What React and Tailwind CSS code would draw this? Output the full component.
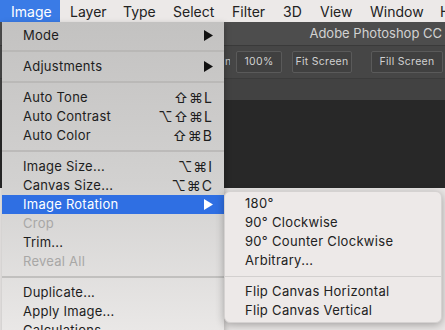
import { useState } from "react";

const bar = ["Image", "Layer", "Type", "Select", "Filter", "3D", "View", "Window", "H"];
const barW = [60, 53, 50, 59, 51, 37, 50, 70, 20];

const menu = [
  { label: "Mode", arrow: true },
  "sep",
  { label: "Adjustments", arrow: true },
  "sep",
  { label: "Auto Tone", keys: "⇧⌘L" },
  { label: "Auto Contrast", keys: "⌥⇧⌘L" },
  { label: "Auto Color", keys: "⇧⌘B" },
  "sep",
  { label: "Image Size...", keys: "⌥⌘I" },
  { label: "Canvas Size...", keys: "⌥⌘C" },
  { label: "Image Rotation", arrow: true, active: true },
  { label: "Crop", disabled: true },
  { label: "Trim..." },
  { label: "Reveal All", disabled: true },
  "sep",
  { label: "Duplicate..." },
  { label: "Apply Image..." },
  { label: "Calculations..." },
];

const sub = ["180°", "90° Clockwise", "90° Counter Clockwise", "Arbitrary...", "sep", "Flip Canvas Horizontal", "Flip Canvas Vertical"];

const Arrow = ({ white }) => (
  <svg width="9" height="11" viewBox="0 0 9 11">
    <path d="M0 0 L9 5.5 L0 11 Z" fill={white ? "#fff" : "#111"} />
  </svg>
);

const App = () => {
  const [open] = useState(true);

  return (
    <div className="relative w-[445px] h-[330px] overflow-hidden bg-[#e9e6e5] font-['Inter',sans-serif]">
      <div className="flex h-[22px] bg-[#ece9e8] text-[14px] text-[#222] items-center">
        {bar.map((b, i) => (
          <div
            key={b}
            style={{ width: barW[i] }}
            className={`h-full flex items-center shrink-0 ${i === 0 ? "pl-[11px] bg-[#3a7be6] text-white" : "pl-[10px]"}`}
          >
            {b}
          </div>
        ))}
      </div>

      <div className="h-[166px] bg-[#272727] flex flex-col">
        <div className="h-[24px] bg-[#4d4d4d] border-b border-[#3a3a3a] flex items-center justify-end pr-[3px] text-[13px] text-[#d2d2d2]">
          Adobe Photoshop CC
        </div>
        <div className="h-[33px] bg-[#464646] border-b border-[#3b3b3b] flex items-center pl-[225px] text-[10.5px] tracking-[0.3px] text-[#d0d0d0]">
          <span className="w-[5px] overflow-hidden">n</span>
          <div className="w-[46px] h-[22px] ml-[6px] border border-[#5a5a5a] bg-[#404040] rounded-[2px] flex items-center justify-center">100%</div>
          <div className="w-[60px] h-[22px] ml-[10px] border border-[#5a5a5a] bg-[#404040] rounded-[2px] flex items-center justify-center">Fit Screen</div>
          <div className="w-[72px] h-[22px] ml-[19px] border border-[#5a5a5a] bg-[#404040] rounded-[2px] flex items-center justify-center shrink-0">Fill Screen</div>
        </div>
        <div className="h-[21px] bg-[#424242]" />
        <div className="flex-1 bg-[#282828]" />
      </div>

      {open && (
        <div className="absolute left-[2px] top-[22px] w-[222px] pt-[4px] bg-linear-to-b from-[#c3c2c1] via-[#d2d1d0] to-[#ebe9e8] text-[13px] tracking-[0.25px] text-[#1d1d1d] shadow-[1px_2px_6px_rgba(0,0,0,0.25)]">
          {menu.map((m, i) =>
            m === "sep" ? (
              <div key={i} className="h-[12px] flex items-center">
                <div className="w-full h-[2px] bg-[#b3b2b1]/70" />
              </div>
            ) : (
              <div
                key={i}
                className={`h-[19px] flex items-center pl-[21px] pr-[11px] ${m.active ? "bg-[#2f6fe3] text-white" : ""} ${m.disabled ? "text-[#a8a7a6]" : ""}`}
              >
                <span className="flex-1">{m.label}</span>
                {m.keys && <span className="text-[14px] tracking-[1px]">{m.keys}</span>}
                {m.arrow && <Arrow white={m.active} />}
              </div>
            )
          )}
        </div>
      )}

      <div className="absolute left-[224px] top-[191px] w-[218px] py-[2px] rounded-[6px] bg-[#ede9e8] text-[13px] tracking-[0.3px] text-[#222] shadow-[0_2px_8px_rgba(0,0,0,0.3)] border border-[#d5d2d1]">
        {sub.map((s, i) =>
          s === "sep" ? (
            <div key={i} className="h-[12px] flex items-center">
              <div className="w-full h-px bg-[#d3d0cf]" />
            </div>
          ) : (
            <div key={i} className="h-[19px] flex items-center pl-[20px]">{s}</div>
          )
        )}
      </div>
    </div>
  );
};

export default App;
